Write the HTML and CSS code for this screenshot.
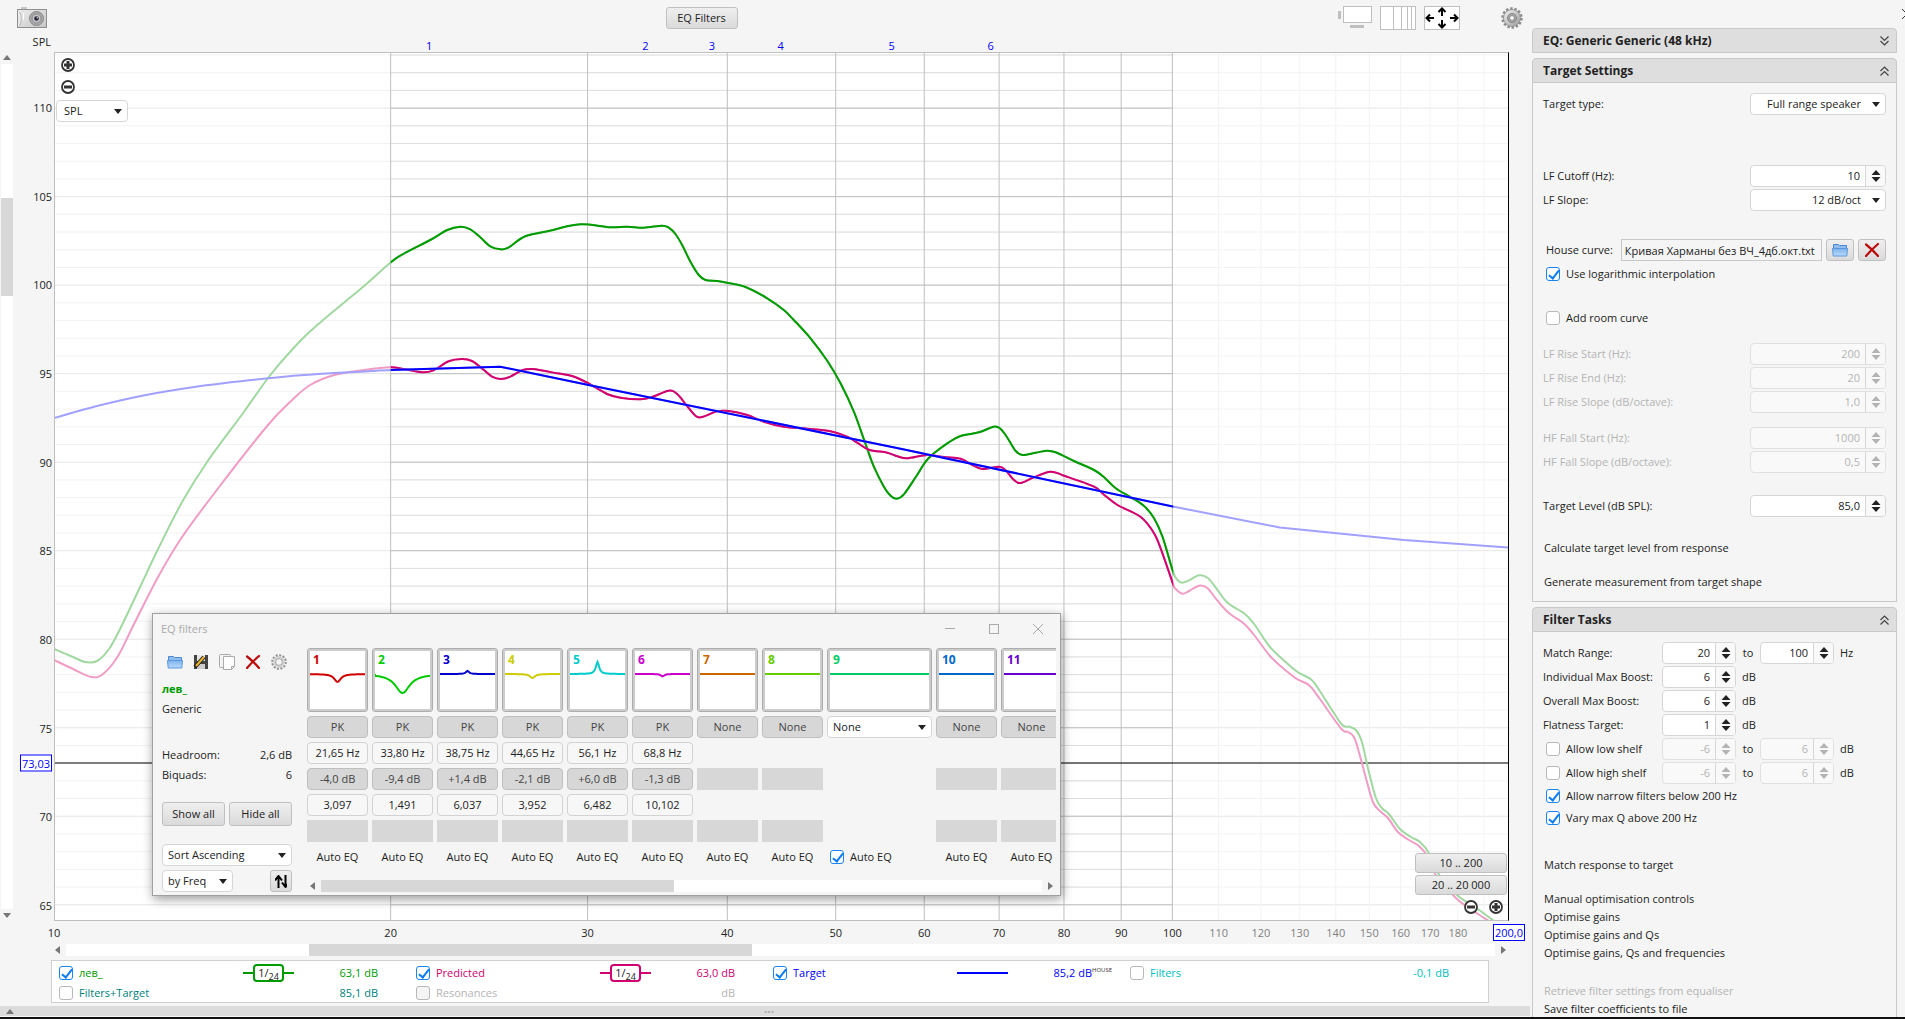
FILE: index.html
```html
<!DOCTYPE html>
<html lang="en">
<head>
  <meta charset="UTF-8" />
  <meta name="viewport" content="width=device-width, initial-scale=1.0" />
  <title>EQ</title>
  <link rel="stylesheet" href="styles.css">
</head>
<body>
  <!-- Shared icons -->
  <svg class="defs" width="0" height="0">
    <defs>
      <linearGradient id="blueGrad" x1="0" y1="0" x2="0" y2="1">
        <stop offset="0" stop-color="#7fb2ee" /><stop offset="1" stop-color="#b9dafb" />
      </linearGradient>
      <linearGradient id="metal" x1="0" y1="0" x2="1" y2="1">
        <stop offset="0" stop-color="#f4f4f4" /><stop offset="1" stop-color="#9a9a9a" />
      </linearGradient>
    </defs>
    <symbol id="folder" viewBox="0 0 16 14">
      <path d="M1.5 7V1.5h5l1 1h7V7" fill="#8fbdf0" stroke="#4a86d2" />
      <path d="M.5 5.500h15l-.7 7.500H1.200z" fill="url(#blueGrad)" stroke="#5b96dc" />
    </symbol>
    <symbol id="cross" viewBox="0 0 14 14">
      <path d="M1 1.500Q7 6 13 13M13 1Q7 6 1 13" fill="none" stroke="#bb0a0a" stroke-width="2.200" stroke-linecap="round" />
    </symbol>
    <symbol id="gear" viewBox="0 0 22 22">
      <circle cx="11" cy="11" r="9.200" fill="none" stroke="#8c8c8c" stroke-width="3" stroke-dasharray="2.400 1.730" />
      <circle cx="11" cy="11" r="8.500" fill="url(#metal)" stroke="#8a8a8a" stroke-width=".8" />
      <circle cx="11" cy="11" r="4.500" fill="#a9a9a9" stroke="#777" stroke-width=".8" />
      <circle cx="11" cy="11" r="2.400" fill="#fff" stroke="#888" />
    </symbol>
    <symbol id="gearLight" viewBox="0 0 16 16">
      <circle cx="8" cy="8" r="6.600" fill="none" stroke="#909090" stroke-width="2.400" stroke-dasharray="2 1.455" />
      <circle cx="8" cy="8" r="4.800" fill="none" stroke="#d4d4d4" stroke-width="2.600" />
      <circle cx="8" cy="8" r="3.400" fill="#f5f5f5" stroke="#909090" stroke-width=".8" />
    </symbol>
    <symbol id="plus" viewBox="0 0 14 14">
      <circle cx="7" cy="7" r="6" fill="#fff" stroke="#333" stroke-width="1.800" />
      <path d="M3 7h8M7 3v8" stroke="#333" stroke-width="3" />
    </symbol>
    <symbol id="minus" viewBox="0 0 14 14">
      <circle cx="7" cy="7" r="6" fill="#fff" stroke="#333" stroke-width="1.800" />
      <path d="M3 7h8" stroke="#333" stroke-width="3" />
    </symbol>
    <symbol id="updown" viewBox="0 0 10 12">
      <path d="M5 0l4.500 5h-9zM5 12L.5 7h9z" fill="currentColor" />
    </symbol>
    <symbol id="chevDown" viewBox="0 0 9 10">
      <path d="M.5.5l4 4 4-4M.5 5l4 4 4-4" fill="none" stroke="#444" stroke-width="1.200" />
    </symbol>
    <symbol id="chevUp" viewBox="0 0 9 10">
      <path d="M.5 5l4-4 4 4M.5 9.500l4-4 4 4" fill="none" stroke="#444" stroke-width="1.200" />
    </symbol>
  </svg>

  <div class="app">
    <main class="graph">
      <div class="toolbar">
        <button class="icon-btn camera" aria-label="Capture">
          <svg width="30" height="22" viewBox="0 0 30 22">
            <path d="M4 0h6v3H4z" fill="#c9c9c9" />
            <rect x=".5" y="2.500" width="29" height="18" fill="url(#metal)" stroke="#8f8f8f" />
            <rect x="1" y="3" width="28" height="17" fill="#e6e6e6" opacity=".6" />
            <path d="M1.500 5Q5 11 1.500 19M6.500 6v7" fill="none" stroke="#fff" />
            <path d="M2.500 5Q6 11 2.500 19" fill="none" stroke="#b5b5b5" />
            <circle cx="19.500" cy="11.500" r="7" fill="#a8a8a8" stroke="#888" />
            <circle cx="19.500" cy="11.500" r="4.500" fill="#c4c4c4" stroke="#8a8a8a" />
            <circle cx="19.500" cy="11.500" r="2.300" fill="#26263a" />
            <circle cx="20.300" cy="10.800" r=".8" fill="#ddd" />
          </svg>
        </button>
        <button class="btn eq-btn">EQ Filters</button>
        <div class="view-btns">
          <button class="icon-btn" aria-label="Scrollbars">
            <svg width="34" height="24"><rect x="5.500" y=".5" width="28" height="16" fill="#fff" stroke="#bfbfbf" /><path d="M0 5h3v8H0zM12 19h14v3H12z" fill="#bfbfbf" /></svg>
          </button>
          <button class="icon-btn" aria-label="Frequency axis">
            <svg width="36" height="24"><rect x=".5" y=".5" width="35" height="23" fill="#fff" stroke="#bfbfbf" /><path d="M13.500 1v22M21.500 1v22M27.500 1v22M31.500 1v22" stroke="#bfbfbf" /></svg>
          </button>
          <button class="icon-btn" aria-label="Graph limits">
            <svg width="36" height="24"><rect x=".5" y=".5" width="35" height="23" fill="#fff" stroke="#bfbfbf" /><path d="M18 10V3M14.500 6L18 2.500 21.500 6M18 14v7M14.500 18l3.500 3.500 3.500-3.500M10 12H3M6 8.500L2.500 12 6 15.500M26 12h7M30 8.500l3.500 3.500-3.500 3.500" fill="none" stroke="#000" stroke-width="2" /></svg>
          </button>
        </div>
        <button class="icon-btn" aria-label="Graph controls"><svg width="22" height="22"><use href="#gear" /></svg></button>
      </div>

      <div class="axis-title">SPL</div>
      <div class="markers" id="markers"></div>

      <div class="vscroll">
        <span class="arrow up"></span>
        <div class="track"><div class="thumb"></div></div>
        <span class="arrow down"></span>
      </div>
      <div class="y-axis" id="yAxis"></div>
      <div class="plot">
        <svg id="chart" viewBox="55 53 1452 867" preserveAspectRatio="none">
          <defs>
            <clipPath id="matchRange"><rect x="390.500" y="0" width="782" height="1000" /></clipPath>
          </defs>
        </svg>
        <div class="plot-tools">
          <button class="icon-btn" aria-label="Zoom in"><svg width="14" height="14"><use href="#plus" /></svg></button>
          <button class="icon-btn" aria-label="Zoom out"><svg width="14" height="14"><use href="#minus" /></svg></button>
          <span class="select"><select aria-label="Graph type"><option>SPL</option></select></span>
        </div>
        <div class="range-tools">
          <button class="btn">10 .. 200</button>
          <button class="btn">20 .. 20 000</button>
          <div class="range-zoom">
            <button class="icon-btn" aria-label="Narrower"><svg width="14" height="14"><use href="#minus" /></svg></button>
            <button class="icon-btn" aria-label="Wider"><svg width="14" height="14"><use href="#plus" /></svg></button>
          </div>
        </div>
      </div>
      <div class="x-axis" id="xAxis"></div>
      <div class="hscroll">
        <span class="arrow left"></span>
        <div class="track"><div class="thumb"></div></div>
        <span class="arrow right"></span>
      </div>

      <div class="legend">
        <div class="trace green">
          <input type="checkbox" id="t1" checked><label for="t1">лев_</label>
          <span class="smoothing"><span class="frac">1/<sub>24</sub></span></span><span class="val">63,1 dB</span>
        </div>
        <div class="trace pink">
          <input type="checkbox" id="t2" checked><label for="t2">Predicted</label>
          <span class="smoothing"><span class="frac">1/<sub>24</sub></span></span><span class="val">63,0 dB</span>
        </div>
        <div class="trace blue">
          <input type="checkbox" id="t3" checked><label for="t3">Target</label>
          <span class="smoothing"></span><span class="val">85,2 dB<sup>HOUSE</sup></span>
        </div>
        <div class="trace cyan">
          <input type="checkbox" id="t4"><label for="t4">Filters</label>
          <span></span><span class="val">-0,1 dB</span>
        </div>
        <div class="trace teal">
          <input type="checkbox" id="t5"><label for="t5">Filters+Target</label>
          <span></span><span class="val">85,1 dB</span>
        </div>
        <div class="trace off">
          <input type="checkbox" id="t6" disabled><label for="t6">Resonances</label>
          <span></span><span class="val">dB</span>
        </div>
      </div>
      <div class="splitter"><span class="arrow up"></span><span class="dots">•••</span></div>

      <!-- EQ filters window -->
      <section class="dialog">
        <header class="dialog-title">
          <span>EQ filters</span>
          <button class="icon-btn" aria-label="Minimise"><svg width="10" height="10"><path d="M0 4.500h10" stroke="#aaa" /></svg></button>
          <button class="icon-btn" aria-label="Maximise"><svg width="10" height="10"><rect x=".5" y=".5" width="9" height="9" fill="none" stroke="#aaa" /></svg></button>
          <button class="icon-btn" aria-label="Close"><svg width="10" height="10"><path d="M0 0l10 10M10 0L0 10" stroke="#aaa" /></svg></button>
        </header>
        <div class="dialog-body">
          <div class="dialog-side">
            <div class="file-btns">
              <button class="icon-btn" aria-label="Open"><svg width="16" height="14"><use href="#folder" /></svg></button>
              <button class="icon-btn" aria-label="Save">
                <svg width="16" height="16"><path d="M1 1h14v14H1z" fill="#444" /><path d="M4 1h8v6H4z" fill="#e8e8e8" /><path d="M4 10h8v5H4z" fill="#ccc" /><path d="M2 13L11 3" stroke="#222" stroke-width="4" /><path d="M3 12L11 3" stroke="#f0b52a" stroke-width="2" /></svg>
              </button>
              <button class="icon-btn" aria-label="Copy">
                <svg width="16" height="16"><rect x=".5" y=".5" width="11" height="13" rx="1" fill="#f4f4f4" stroke="#aaa" /><path d="M4.500 2.500h11v10l-3 3h-8z" fill="#fdfdfd" stroke="#aaa" /><path d="M12.500 15.500v-3h3" fill="none" stroke="#aaa" /></svg>
              </button>
              <button class="icon-btn" aria-label="Delete"><svg width="14" height="14"><use href="#cross" /></svg></button>
              <button class="icon-btn" aria-label="Settings"><svg width="16" height="16"><use href="#gearLight" /></svg></button>
            </div>
            <strong class="name">лев_</strong>
            <div class="info">Generic</div>
            <div class="info space-26"><span>Headroom:</span><span>2,6 dB</span></div>
            <div class="info"><span>Biquads:</span><span>6</span></div>
            <div class="pair space-16"><button class="btn">Show all</button><button class="btn">Hide all</button></div>
            <div class="sort">
              <span class="select wide"><select aria-label="Sort order"><option>Sort Ascending</option></select></span>
              <span class="select"><select aria-label="Sort key"><option>by Freq</option></select></span>
              <button class="btn sort-btn" aria-label="Sort">
                <svg width="14" height="13"><path d="M3.500 13V3M0 5.500L3.500 1 7 5.500M10.500 0v10M7 7.500l3.500 4.500L14 7.500" fill="none" stroke="#000" stroke-width="2" /></svg>
              </button>
            </div>
          </div>
          <div class="dialog-main">
            <div class="filters" id="filters"></div>
            <div class="hscroll">
              <span class="arrow left"></span>
              <div class="track"><div class="thumb"></div></div>
              <span class="arrow right"></span>
            </div>
          </div>
        </div>
      </section>
    </main>

    <aside class="sidebar">
      <button class="icon-btn close" aria-label="Close panel"><svg width="10" height="10"><path d="M0 0l10 10M10 0L0 10" stroke="#333" /></svg></button>
      <section class="panel">
        <h2>EQ: Generic Generic (48 kHz)<svg width="9" height="10"><use href="#chevDown" /></svg></h2>
      </section>
      <section class="panel">
        <h2>Target Settings<svg width="9" height="10"><use href="#chevUp" /></svg></h2>
        <div class="panel-body">
          <div class="row"><label for="ttype">Target type:</label><span class="select field right"><select id="ttype"><option>Full range speaker</option></select></span></div>
          <div class="row space-48"><label for="lfc">LF Cutoff (Hz):</label><span class="spin field"><input id="lfc" value="10"><button aria-label="Step"><svg><use href="#updown" /></svg></button></span></div>
          <div class="row"><label for="lfs">LF Slope:</label><span class="select field right"><select id="lfs"><option>12 dB/oct</option></select></span></div>
          <div class="row house space-26">
            <label for="house">House curve:</label>
            <input class="path" id="house" value="Кривая Харманы без ВЧ_4дб.окт.txt" readonly>
            <button class="btn" aria-label="Browse"><svg width="16" height="14"><use href="#folder" /></svg></button>
            <button class="btn" aria-label="Clear"><svg width="14" height="14"><use href="#cross" /></svg></button>
          </div>
          <div class="row check"><input type="checkbox" id="logi" checked><label for="logi">Use logarithmic interpolation</label></div>
          <div class="row check space-20"><input type="checkbox" id="room"><label for="room">Add room curve</label></div>
          <div class="row off space-12"><label for="rs">LF Rise Start (Hz):</label><span class="spin field"><input id="rs" value="200" disabled><button aria-label="Step" disabled><svg><use href="#updown" /></svg></button></span></div>
          <div class="row off"><label for="re">LF Rise End (Hz):</label><span class="spin field"><input id="re" value="20" disabled><button aria-label="Step" disabled><svg><use href="#updown" /></svg></button></span></div>
          <div class="row off"><label for="rsl">LF Rise Slope (dB/octave):</label><span class="spin field"><input id="rsl" value="1,0" disabled><button aria-label="Step" disabled><svg><use href="#updown" /></svg></button></span></div>
          <div class="row off space-12"><label for="fs">HF Fall Start (Hz):</label><span class="spin field"><input id="fs" value="1000" disabled><button aria-label="Step" disabled><svg><use href="#updown" /></svg></button></span></div>
          <div class="row off"><label for="fsl">HF Fall Slope (dB/octave):</label><span class="spin field"><input id="fsl" value="0,5" disabled><button aria-label="Step" disabled><svg><use href="#updown" /></svg></button></span></div>
          <div class="row space-20"><label for="tl">Target Level (dB SPL):</label><span class="spin field"><input id="tl" value="85,0"><button aria-label="Step"><svg><use href="#updown" /></svg></button></span></div>
          <button class="task space-20">Calculate target level from response</button>
          <button class="task space-16">Generate measurement from target shape</button>
        </div>
      </section>
      <section class="panel last">
        <h2>Filter Tasks<svg width="9" height="10"><use href="#chevUp" /></svg></h2>
        <div class="panel-body tasks">
          <div class="row"><label for="m1">Match Range:</label><span class="spin"><input id="m1" value="20"><button aria-label="Step"><svg><use href="#updown" /></svg></button></span><label for="m2" class="to">to</label><span class="spin"><input id="m2" value="100"><button aria-label="Step"><svg><use href="#updown" /></svg></button></span><span class="unit">Hz</span></div>
          <div class="row"><label for="ib">Individual Max Boost:</label><span class="spin"><input id="ib" value="6"><button aria-label="Step"><svg><use href="#updown" /></svg></button></span><span class="unit">dB</span></div>
          <div class="row"><label for="ob">Overall Max Boost:</label><span class="spin"><input id="ob" value="6"><button aria-label="Step"><svg><use href="#updown" /></svg></button></span><span class="unit">dB</span></div>
          <div class="row"><label for="ft">Flatness Target:</label><span class="spin"><input id="ft" value="1"><button aria-label="Step"><svg><use href="#updown" /></svg></button></span><span class="unit">dB</span></div>
          <div class="row check"><input type="checkbox" id="ls"><label for="ls">Allow low shelf</label><span class="spin off"><input aria-label="Low shelf min" value="-6" disabled><button aria-label="Step" disabled><svg><use href="#updown" /></svg></button></span><span class="to">to</span><span class="spin off"><input aria-label="Low shelf max" value="6" disabled><button aria-label="Step" disabled><svg><use href="#updown" /></svg></button></span><span class="unit">dB</span></div>
          <div class="row check"><input type="checkbox" id="hs"><label for="hs">Allow high shelf</label><span class="spin off"><input aria-label="High shelf min" value="-6" disabled><button aria-label="Step" disabled><svg><use href="#updown" /></svg></button></span><span class="to">to</span><span class="spin off"><input aria-label="High shelf max" value="6" disabled><button aria-label="Step" disabled><svg><use href="#updown" /></svg></button></span><span class="unit">dB</span></div>
          <div class="row check tight"><input type="checkbox" id="nf" checked><label for="nf">Allow narrow filters below 200 Hz</label></div>
          <div class="row check tight"><input type="checkbox" id="vq" checked><label for="vq">Vary max Q above 200 Hz</label></div>
          <button class="task space-26">Match response to target</button>
          <button class="task space-16">Manual optimisation controls</button>
          <button class="task">Optimise gains</button>
          <button class="task">Optimise gains and Qs</button>
          <button class="task">Optimise gains, Qs and frequencies</button>
          <button class="task space-20" disabled>Retrieve filter settings from equaliser</button>
          <button class="task">Save filter coefficients to file</button>
        </div>
      </section>
    </aside>
  </div>
  <script src="script.js"></script>
</body>
</html>
```
FILE: styles.css
```css
* {
  box-sizing: border-box;
}
body {
  margin: 0;
  background: #f5f5f5;
  color: #222;
  font: 11px/18px "Open Sans", "Noto Sans", sans-serif;
}
button, input, select {
  font: inherit;
  color: inherit;
  margin: 0;
}
svg {
  display: block;
}
.defs {
  position: absolute;
}
.app {
  display: flex;
  height: 100vh;
  overflow: hidden;
  border-bottom: 2px solid #111;
}

/* spacing helpers */
.space-12 { margin-top: 12px; }
.space-16 { margin-top: 16px; }
.space-20 { margin-top: 20px; }
.space-26 { margin-top: 26px; }
.space-48 { margin-top: 48px; }

/* controls */
.icon-btn {
  display: flex;
  align-items: center;
  justify-content: center;
  padding: 0;
  border: 0;
  background: none;
}
.btn {
  display: flex;
  align-items: center;
  justify-content: center;
  height: 22px;
  padding: 0 4px;
  border: 1px solid #c0c0c0;
  border-radius: 3px;
  background: linear-gradient(#efefef, #dadada);
}
input[type="checkbox"] {
  appearance: none;
  position: relative;
  flex: none;
  width: 14px;
  height: 14px;
  border: 1px solid #b8b8b8;
  border-radius: 3px;
  background: #fff;
}
input[type="checkbox"]:disabled {
  background: #f5f5f5;
}
input[type="checkbox"]:checked {
  border-color: #1a85f0;
}
input[type="checkbox"]:checked::after {
  content: "";
  position: absolute;
  left: 4px;
  top: 0;
  width: 4px;
  height: 9px;
  border: solid #0a7cf5;
  border-width: 0 2px 2px 0;
  transform: rotate(38deg);
}
.select {
  position: relative;
  display: block;
  height: 22px;
}
.select select {
  appearance: none;
  width: 100%;
  height: 100%;
  padding: 0 20px 0 5px;
  border: 1px solid #d6d6d6;
  border-radius: 4px;
  background: #fff;
}
.plot-tools .select select {
  padding-left: 7px;
}
.select.right select {
  padding-right: 24px;
  text-align: right;
  text-align-last: right;
}
.select::after {
  content: "";
  position: absolute;
  right: 6px;
  top: 9px;
  border: solid transparent;
  border-width: 5px 4px 0;
  border-top-color: #222;
  pointer-events: none;
}
.spin {
  display: flex;
  flex: none;
  width: 74px;
  height: 22px;
  border: 1px solid #d6d6d6;
  border-radius: 4px;
  background: #fff;
  overflow: hidden;
}
.spin input {
  flex: 1;
  min-width: 0;
  padding: 0 5px;
  border: 0;
  background: none;
  text-align: right;
}
.spin button {
  display: flex;
  align-items: center;
  justify-content: center;
  width: 20px;
  padding: 0;
  border: 0;
  border-left: 1px solid #d6d6d6;
  background: #f9f9f9;
}
.spin svg {
  width: 10px;
  height: 12px;
}
.off, .off input, .off button {
  color: #b4b4b4;
}
.off .spin, .spin.off {
  background: #f9f9f9;
  border-color: #e0e0e0;
}
.arrow {
  flex: none;
  width: 0;
  height: 0;
  border: 4px solid transparent;
}
.arrow.up { border-top: 0; border-bottom: 5px solid #777; }
.arrow.down { border-bottom: 0; border-top: 5px solid #777; }
.arrow.left { border-left: 0; border-right: 5px solid #777; }
.arrow.right { border-right: 0; border-left: 5px solid #777; }
.track {
  flex: 1;
  display: flex;
  background: #fff;
}
.thumb {
  background: #d7d7d7;
}
.hscroll {
  display: flex;
  align-items: center;
  gap: 6px;
  height: 12px;
}
.hscroll .track {
  height: 12px;
}

/* graph area */
.graph {
  position: relative;
  flex: 1;
  min-width: 0;
  display: grid;
  grid-template-columns: 14px 40px 1fr 21px;
  grid-template-rows: 32px 20px 1fr 23px 12px 4px 43px 3px 11px;
}
.toolbar {
  grid-column: 1 / -1;
  display: flex;
  align-items: center;
  padding: 4px 7px 0 17px;
}
.camera {
  width: 48px;
  justify-content: flex-start;
}
.eq-btn {
  width: 72px;
  margin-left: auto;
}
.view-btns {
  display: flex;
  gap: 8px;
  margin: 0 41px 0 auto;
}
.axis-title {
  grid-column: 1 / 3;
  text-align: right;
  padding: 1px 3px 0 0;
}
.markers {
  grid-column: 3;
  position: relative;
  color: #00f;
}
.markers span, .x-axis span {
  position: absolute;
  transform: translateX(-50%);
}
.markers span {
  top: 5px;
}
.vscroll {
  grid-column: 1;
  grid-row: 3;
  display: flex;
  flex-direction: column;
  align-items: center;
  gap: 4px;
  padding: 3px 0;
}
.vscroll .track {
  width: 12px;
  flex-direction: column;
}
.vscroll .thumb {
  height: 98px;
  margin-top: 134px;
}
.y-axis {
  grid-column: 2;
  grid-row: 3;
  position: relative;
}
.y-axis span {
  position: absolute;
  right: 2px;
  transform: translateY(-50%);
}
.y-axis .cursor, .x-axis .cursor {
  padding: 0 1px;
  border: 1px solid #00f;
  background: #fff;
  color: #00f;
  line-height: 15px;
}
.plot {
  grid-column: 3;
  grid-row: 3;
  position: relative;
  min-height: 0;
  border: 1px solid #bfbfbf;
  border-right-color: #000;
  background: #fff;
}
.plot > svg {
  position: absolute;
  width: 100%;
  height: 100%;
}
.plot > svg * {
  vector-effect: non-scaling-stroke;
}
.grid line {
  stroke-width: 1;
  shape-rendering: crispEdges;
}
.plot-tools {
  position: absolute;
  left: 1px;
  top: 5px;
  width: 72px;
}
.plot-tools .icon-btn {
  margin-left: 5px;
  height: 14px;
}
.plot-tools .icon-btn + .icon-btn {
  margin-top: 8px;
}
.plot-tools .select {
  margin-top: 6px;
}
.range-tools {
  position: absolute;
  right: 1px;
  bottom: 6px;
  width: 92px;
}
.range-tools .btn {
  width: 100%;
  height: 20px;
  margin-bottom: 2px;
}
.range-zoom {
  display: flex;
  justify-content: flex-end;
  gap: 11px;
  padding: 3px 4px 0;
}
.x-axis {
  grid-column: 3;
  grid-row: 4;
  position: relative;
}
.x-axis span {
  top: 3px;
}
.x-axis .minor {
  color: #808080;
}
.graph > .hscroll {
  grid-column: 3;
  grid-row: 5;
  padding: 0 3px 0 1px;
}
.graph > .hscroll .thumb {
  width: 31%;
  margin-left: 17%;
}
.legend {
  grid-column: 1 / 5;
  grid-row: 7;
  display: grid;
  grid-template-columns: repeat(4, 357px);
  margin: 0 41px 0 51px;
  padding: 2px 7px 0;
  border: 1px solid #d0d0d0;
  background: #fff;
}
.trace {
  display: grid;
  grid-template-columns: 20px 164px 51px 84px;
  align-items: center;
  height: 20px;
}
.trace .val {
  position: relative;
  text-align: right;
}
.val sup {
  position: absolute;
  left: 100%;
  top: 3px;
  font-size: 6px;
  line-height: 6px;
  color: #333;
}
.trace.green { color: #009b00; }
.trace.pink { color: #d0006f; }
.trace.blue { color: #00f; }
.trace.cyan { color: #00c0c0; }
.trace.teal { color: #007f80; }
.trace.off { color: #b4b4b4; }
.smoothing {
  display: flex;
  justify-content: center;
  height: 18px;
  background: linear-gradient(currentColor, currentColor) center / 100% 2px no-repeat;
}
.frac {
  width: 31px;
  height: 18px;
  border: 2px solid;
  border-radius: 4px;
  background: #fff;
  line-height: 13px;
  text-align: center;
}
.frac::first-letter {
  color: #222;
}
.frac sub {
  font-size: 9px;
  line-height: 9px;
  vertical-align: -3px;
  color: #222;
}
.splitter {
  grid-column: 1 / -1;
  grid-row: 9;
  display: flex;
  align-items: center;
  padding: 0 6px;
  border-bottom: 1px solid #f5f5f5;
  background: #dcdcdc;
}
.dots {
  margin: auto;
  font-size: 9px;
  line-height: 9px;
  color: #aaa;
}

/* EQ filters window */
.dialog {
  position: absolute;
  left: 152px;
  top: 613px;
  width: 909px;
  border: 1px solid #a0a0a0;
  background: #f5f5f5;
  box-shadow: 1px 3px 10px rgba(0, 0, 0, .4);
}
.dialog-title {
  display: flex;
  align-items: center;
  gap: 34px;
  height: 34px;
  padding: 0 17px 4px 8px;
  color: #aaa;
}
.dialog-title span {
  margin-right: auto;
}
.dialog-body {
  display: flex;
  gap: 15px;
  padding: 0 4px 3px 9px;
}
.dialog-side {
  width: 130px;
}
.file-btns {
  display: flex;
  justify-content: space-between;
  padding: 6px 5px 10px;
}
.file-btns .icon-btn {
  width: 16px;
  height: 16px;
}
.name {
  display: block;
  height: 20px;
  color: #009b00;
}
.info {
  display: flex;
  justify-content: space-between;
  height: 20px;
}
.pair {
  display: flex;
  gap: 4px;
}
.pair .btn {
  flex: 1;
  height: 24px;
}
.sort {
  display: grid;
  grid-template-columns: 71px 1fr 22px;
  gap: 4px 0;
  margin-top: 18px;
}
.sort .wide {
  grid-column: 1 / -1;
}
.sort-btn {
  grid-column: 3;
}
.dialog-main {
  flex: 1;
  min-width: 0;
}
.dialog-main .hscroll {
  margin-top: 12px;
  padding: 0 3px;
}
.dialog-main .hscroll .thumb {
  width: 49%;
}
.filters {
  display: flex;
  gap: 4px;
  overflow: hidden;
}
.filter {
  flex: none;
  width: 61px;
  display: grid;
  grid-template-rows: 64px;
  grid-auto-rows: 22px;
  gap: 4px;
}
.filter.open {
  width: 105px;
}
.thumbnail {
  position: relative;
  border: 1px solid #adadad;
  border-radius: 3px;
  background: #fff;
  box-shadow: inset 0 0 0 2px #ccc;
}
.thumbnail b {
  position: absolute;
  left: 5px;
  top: 2px;
  font-size: 12px;
}
.thumbnail svg {
  width: calc(100% - 4px);
  height: 60px;
  margin: 1px 2px;
}
.thumbnail path {
  vector-effect: non-scaling-stroke;
}
.filter .cell {
  display: block;
  width: 100%;
  padding: 0;
  border: 1px solid #d2d2d2;
  border-radius: 4px;
  background: #f7f7f7;
  text-align: center;
}
.filter .cell.grey {
  border-color: #bfbfbf;
  background: #d7d7d7;
  color: #444;
}
.filter .blank {
  background: #d7d7d7;
}
.auto {
  display: flex;
  align-items: center;
  justify-content: center;
  gap: 6px;
}
.open .auto {
  justify-content: flex-start;
  padding-left: 3px;
}

/* sidebar */
.sidebar {
  position: relative;
  display: flex;
  flex-direction: column;
  gap: 5px;
  width: 375px;
  padding: 28px 8px 1px 2px;
  overflow: hidden;
}
.close {
  position: absolute;
  right: -7px;
  top: 9px;
}
.panel h2 {
  display: flex;
  align-items: center;
  justify-content: space-between;
  height: 25px;
  margin: 0;
  padding: 0 7px 0 10px;
  border: 1px solid #c9c9c9;
  border-radius: 4px 4px 0 0;
  background: #dedede;
  font-size: 12px;
}
.panel-body {
  display: flex;
  flex-direction: column;
  padding: 10px;
  border: 1px solid #c9c9c9;
  border-top: 0;
}
.panel.last {
  flex: 1;
  min-height: 0;
}
.row {
  display: flex;
  align-items: center;
  height: 22px;
  margin-bottom: 2px;
}
.field {
  width: 136px;
  margin-left: auto;
}
.house {
  gap: 4px;
  padding-left: 3px;
}
.path {
  flex: 1;
  min-width: 0;
  height: 22px;
  margin-left: 4px;
  padding: 0 3px;
  border: 1px solid #c9c9c9;
  background: #f5f5f5;
}
.house .btn {
  width: 28px;
}
.check {
  gap: 6px;
  padding-left: 3px;
}
.tasks .row {
  gap: 0;
}
.tasks .row > label:not(.to) {
  width: 119px;
}
.tasks .check > label:not(.to) {
  width: 102px;
  padding-left: 6px;
  white-space: nowrap;
}
.tasks .check.tight {
  height: 20px;
}
.to {
  width: 24px;
  text-align: center;
}
.unit {
  padding-left: 6px;
}
.task {
  height: 18px;
  padding: 0 1px;
  border: 0;
  background: none;
  text-align: left;
}
.task:disabled {
  color: #b4b4b4;
}
```
FILE: script.js
```js
const NS = "http://www.w3.org/2000/svg";
const chart = document.getElementById("chart");
const xPct = f => Math.log10(f / 10) / Math.log10(20) * 100;
const yPct = db => (113.17 - db) / 49.03 * 100;
const xPos = f => 54 + xPct(f) * 14.54;
const yPos = db => 52 + yPct(db) * 8.68;

function add(parent, tag, attrs) {
  const el = document.createElementNS(NS, tag);
  for (const k in attrs) el.setAttribute(k, attrs[k]);
  parent.appendChild(el);
  return el;
}

// Grid
const grid = add(chart, "g", { class: "grid" });
function line(x1, y1, x2, y2, stroke) {
  add(grid, "line", { x1, y1, x2, y2, stroke });
}
for (let db = 65; db <= 113; db++) {
  const y = yPos(db);
  const major = db % 5 === 0;
  line(54, y, 1508, y, major ? "#e6e6e6" : "#f3f3f3");
  line(390, y, 1172, y, major ? "#bfbfbf" : "#dedede");
}
for (let f = 20; f < 200; f += 10) {
  const x = xPos(f);
  line(x, 52, x, 921, f > 100 ? "#f3f3f3" : "#bfbfbf");
}
line(54, 763, 1508, 763, "#000");

// Axis labels
function label(parent, text, style, cls) {
  const s = document.createElement("span");
  s.textContent = text;
  s.style.cssText = style;
  if (cls) s.className = cls;
  document.getElementById(parent).appendChild(s);
}
for (let db = 65; db <= 110; db += 5) label("yAxis", db, `top:${yPct(db)}%`);
label("yAxis", "73,03", `top:${yPct(73.03)}%`, "cursor");
for (let f = 10; f <= 180; f += 10) label("xAxis", f, `left:${xPct(f)}%`, f > 100 ? "minor" : "");
label("xAxis", "200,0", "left:100%", "cursor");
[21.65, 33.8, 38.75, 44.65, 56.1, 68.8].forEach((f, i) => label("markers", i + 1, `left:${xPct(f)}%`));

// Traces
function smooth(p) {
  let d = `M${p[0]}`;
  for (let i = 0; i < p.length - 1; i++) {
    const a = p[i - 1] || p[i], b = p[i], c = p[i + 1], e = p[i + 2] || c;
    d += `C${b[0] + (c[0] - a[0]) / 6},${b[1] + (c[1] - a[1]) / 6} ${c[0] - (e[0] - b[0]) / 6},${c[1] - (e[1] - b[1]) / 6} ${c}`;
  }
  return d;
}
const pairs = s => s.trim().split(/\s+/).map(t => t.split(",").map(Number));

const green = pairs(`54,649 73,657 85,662 97,661 109,649 121,627 140,587 158,549 182,502 207,462 243,413 271,374 301,340
  322,320.7 353,295 367,283.3 390,262.7 403,254 430,240 447,230 460,226.7 470,229.3 480,237.3 490,246.3 500,249.3 508,247.7
  525,236.3 551.7,230.3 566.7,226.3 580,224.3 590,224.7 610,227.3 627,226.7 643.3,227.7 661.7,225.7 668.3,227.7 675,234
  681.7,245 690,261.7 698.3,275 705,280 716.7,281 727.7,283 745,287 766.7,298.3 783.3,310 793.3,320 810,338.3 826.7,360.7
  840,383.3 853.3,411.7 865,444 873.3,466.7 883.3,486.7 890,495.7 896,498.7 903.3,494.3 915,477.3 925,461.7 933.3,453.3
  946.7,443.3 960,436 978.3,432.3 993.3,426.7 1000,429 1006.7,437.7 1015,451 1021.7,455 1035,452.7 1046.7,450.7 1055,452.3
  1073.3,461 1093.3,470 1103.3,477.3 1115,488.3 1130,497.3 1143.3,506 1153.3,518.3 1161.7,536.7 1172.3,571.7 1176.7,580
  1181.7,582.7 1188.3,580.3 1198.3,575.3 1206.7,577.7 1215,587.7 1226.7,602.7 1243.3,613.3 1253.3,624 1268.3,646
  1283.3,660.7 1296.7,672 1310,679.3 1318.3,690 1340,723.3 1348.3,726.7 1355,730 1361,742 1367,768 1375,798 1381,808
  1388,814 1399,829 1410,837 1419,842 1428,853 1437,873 1456,895 1474,907 1493,921`);
const pink = pairs(`54,660 73,669 91,677 103,674 118,656 134,624 158,577 182,537 219,487 267,426 292,400 310,385 334,375
  364,370 390,367.3 403.3,369 421.7,372.3 433.3,370.3 448.3,361.3 461.7,359 471.7,361 483.3,369.7 491.7,376.7 500.7,379
  510,376.7 521.7,370.3 531.7,369 543.3,370.7 556.7,373.3 571.7,376 587.3,383 606.7,394 620,397.7 640,399.3 651.7,397
  668.3,390.7 676.7,394 686.7,406 695,415.7 701.7,417 716.7,411.3 728.3,411 746.7,415 763.3,421.7 783.3,426.7 806.7,428.7
  830,431.3 846.7,436.7 856.7,442.7 868.3,449.7 886.7,452.7 896.7,456.3 906.7,458.3 926.7,455 943.3,457 960,458.7 970,464
  981.7,469 998.3,466.7 1005,470.3 1013.3,480 1020,483 1033.3,477.3 1050,471.7 1063.3,475.7 1093.3,486.7 1103.3,494.7
  1116.7,505 1140,517 1153.3,533.3 1161.7,553.3 1172.3,584 1175,589 1181.7,593.7 1188.3,591 1198.3,585.7 1206.7,588.3
  1216.7,600.7 1228.3,613.3 1243.3,623.7 1253.3,635 1268.3,655 1280,666.3 1295,678.3 1308.3,685.3 1318.3,698 1340,728.3
  1347,732 1353,737 1358,752 1365,778 1372,802 1379,811 1387,818 1397,832 1408,840 1418,846 1427,857 1436,877 1456,899
  1474,912 1488,921`);
const blueLeft = pairs("54,418 97,406 146,395 194,387 243,381 304,375 390,370");
const blue = smooth(blueLeft) + "L500,366.700 587,384.700 900,448.700 1172,506.500 1279,527.500 1403,540 1508,547.500";

function trace(d, pale, full) {
  add(chart, "path", { d, fill: "none", stroke: pale, "stroke-width": 2 });
  add(chart, "path", { d, fill: "none", stroke: full, "stroke-width": 2, "clip-path": "url(#matchRange)" });
}
trace(smooth(green), "#a0d8a0", "#009b00");
trace(smooth(pink), "#f09cc5", "#d0006f");
trace(blue, "#a0a0ff", "#0000ff");

// Filters
const filters = [
  ["#d00000", "PK", "21,65 Hz", "-4,0 dB", "3,097", 8, 4],
  ["#00cc00", "PK", "33,80 Hz", "-9,4 dB", "1,491", 19, 9],
  ["#0000cc", "PK", "38,75 Hz", "+1,4 dB", "6,037", -3, 2],
  ["#cccc00", "PK", "44,65 Hz", "-2,1 dB", "3,952", 4, 3],
  ["#00cccc", "PK", "56,1 Hz", "+6,0 dB", "6,482", -12, 2],
  ["#cc00cc", "PK", "68,8 Hz", "-1,3 dB", "10,102", 2.5, 2],
  ["#cc6600", "None"], ["#66cc00", "None"], ["#00cc66", "None"], ["#0066cc", "None"], ["#6600cc", "None"]
];
document.getElementById("filters").innerHTML = filters.map(([color, type, freq, gain, q, depth = 0, width = 1], i) => {
  let d = "M0,24";
  for (let x = 0; x <= 56; x++) d += `L${x},${24 + depth / (1 + ((x - 28) / width) ** 2)}`;
  const open = i === 8;
  const cell = (v, cls = "") => `<button class="cell ${cls}">${v}</button>`;
  const blank = `<span class="blank"></span>`;
  return `<div class="filter${open ? " open" : ""}">
    <div class="thumbnail"><b style="color:${color}">${i + 1}</b>
      <svg viewBox="0 0 56 60" preserveAspectRatio="none"><path d="${d}" fill="none" stroke="${color}" stroke-width="2"/></svg></div>
    ${open ? `<span class="select"><select aria-label="Filter type"><option>${type}</option></select></span>` : cell(type, "grey")}
    ${freq ? cell(freq) : "<span></span>"}
    ${gain ? cell(gain, "grey") : open ? "<span></span>" : blank}
    ${q ? cell(q) : "<span></span>"}
    ${open ? "<span></span>" : blank}
    ${open ? `<div class="auto"><input type="checkbox" id="auto9" checked><label for="auto9">Auto EQ</label></div>` : `<div class="auto">Auto EQ</div>`}
  </div>`;
}).join("");
```
